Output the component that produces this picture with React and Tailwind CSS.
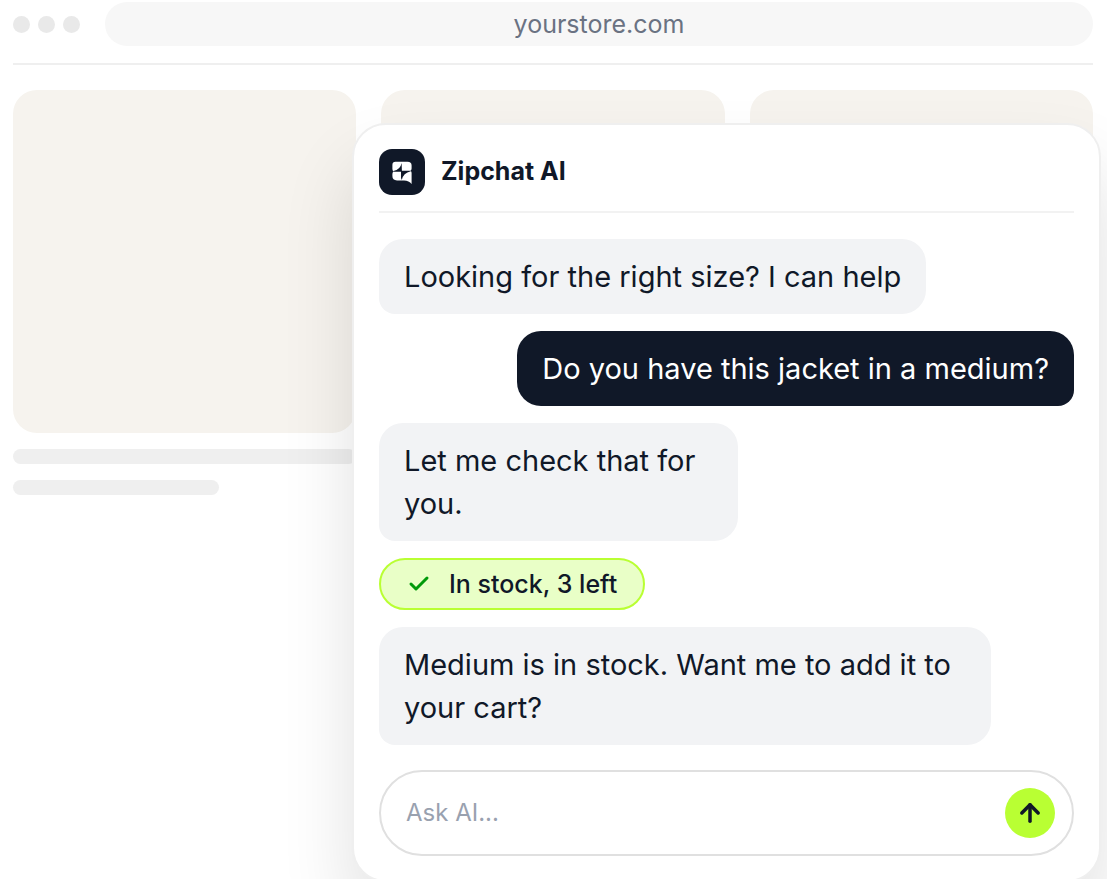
import React from 'react';
import { ArrowUp, Check } from 'lucide-react';

const messages = [
  { id: 1, from: 'agent', text: 'Looking for the right size? I can help' },
  { id: 2, from: 'customer', text: 'Do you have this jacket in a medium?' },
  { id: 3, from: 'agent', text: 'Let me check that for you.', width: 'max-w-[359px]' },
  { id: 4, from: 'status', text: 'In stock, 3 left' },
  { id: 5, from: 'agent', text: 'Medium is in stock. Want me to add it to your cart?', width: 'max-w-[612px]' },
];

const ZipchatLogo = () => (
  <svg viewBox="0 0 46 46" className="size-[46px] shrink-0" aria-hidden="true">
    <rect width="46" height="46" rx="13" fill="#101828" />
    <path
      d="M16.5 12.8H28.5Q32.6 12.8 32.6 16.5V19.5Q32.6 21 31.6 21.8Q32.6 22.500 32.6 24V35Q30 31.400 25 31.400H18Q13.400 31.400 13.400 27V25Q13.400 23.200 14.600 22.500Q13.400 21.800 13.400 20V16Q13.400 12.800 16.500 12.800Z"
      fill="white"
    />
    <path d="M22.6 14Q21.500 20.500 14.400 22.100V22.700H22V29L22.800 31Q24.200 24 31.800 22.300V21.700H22.900Z" fill="#101828" />
  </svg>
);

const Message = ({ message }) => {
  if (message.from === 'status') {
    return (
      <div className="flex items-center gap-[18px] self-start rounded-full border-2 border-[#b9ff33] bg-[#e9ffc7] px-[26px] py-2 text-[25px] leading-8 font-medium">
        <Check size={24} strokeWidth={3} className="text-[#009a0a]" />
        {message.text}
      </div>
    );
  }

  if (message.from === 'customer') {
    return (
      <p className="self-end rounded-3xl rounded-br-2xl bg-[#101828] px-[25px] py-4 text-[29px] leading-[43px] text-white">
        {message.text}
      </p>
    );
  }

  return (
    <p className={`self-start rounded-3xl rounded-bl-2xl bg-[#f2f3f5] px-[25px] py-4 text-[29px] leading-[43px] ${message.width || ''}`}>
      {message.text}
    </p>
  );
};

const Storefront = () => (
  <div className="pt-0.5 pr-[14px] pl-[13px]">
    <div className="flex items-center gap-[25px] border-b-2 border-[#efefef] pb-[17px]">
      <div className="flex gap-2">
        <span className="size-[17px] rounded-full bg-[#e9e9e9]" />
        <span className="size-[17px] rounded-full bg-[#e9e9e9]" />
        <span className="size-[17px] rounded-full bg-[#e9e9e9]" />
      </div>
      <div className="flex-1 rounded-full bg-[#f7f7f7] text-center text-[25px] leading-[44px] text-[#6a7282]">
        yourstore.com
      </div>
    </div>

    {/* Product placeholders */}
    <div className="mt-[25px] grid grid-cols-3 gap-[25px]">
      {[1, 2, 3].map((product) => (
        <div key={product}>
          <div className="aspect-square rounded-3xl bg-[#f6f3ee]" />
          <div className="mt-4 h-[15px] rounded-full bg-[#efefef]" />
          <div className="mt-4 h-[15px] w-3/5 rounded-full bg-[#efefef]" />
        </div>
      ))}
    </div>
  </div>
);

const App = () => (
  <div className="relative h-screen overflow-hidden bg-white font-['Inter',sans-serif] text-[#101828]">
    <Storefront />

    {/* Chat widget floating over the store */}
    <section className="absolute top-[123px] right-1.5 left-[352px] rounded-[34px] border-2 border-[#efefef] bg-white px-[25px] py-6 shadow-[0_42px_72px_rgba(0,0,0,0.12)]">
      <header className="flex items-center gap-4 border-b-2 border-[#f2f2f2] pb-4">
        <ZipchatLogo />
        <h1 className="text-[25px] font-bold">Zipchat AI</h1>
      </header>

      <div className="flex flex-col gap-[17px] pt-[26px]">
        {messages.map((message) => (
          <Message key={message.id} message={message} />
        ))}
      </div>

      <form
        className="mt-[25px] flex items-center rounded-full border-2 border-[#e0e0e0] py-4 pr-[17px] pl-[25px]"
        onSubmit={(e) => e.preventDefault()}
      >
        <input
          type="text"
          aria-label="Ask AI"
          placeholder="Ask AI..."
          className="min-w-0 flex-1 bg-transparent text-2xl outline-none placeholder:text-[#99a1af]"
        />
        <button type="submit" aria-label="Send" className="flex size-[50px] items-center justify-center rounded-full bg-[#b9ff33]">
          <ArrowUp size={28} strokeWidth={3} />
        </button>
      </form>
    </section>
  </div>
);

export default App;
